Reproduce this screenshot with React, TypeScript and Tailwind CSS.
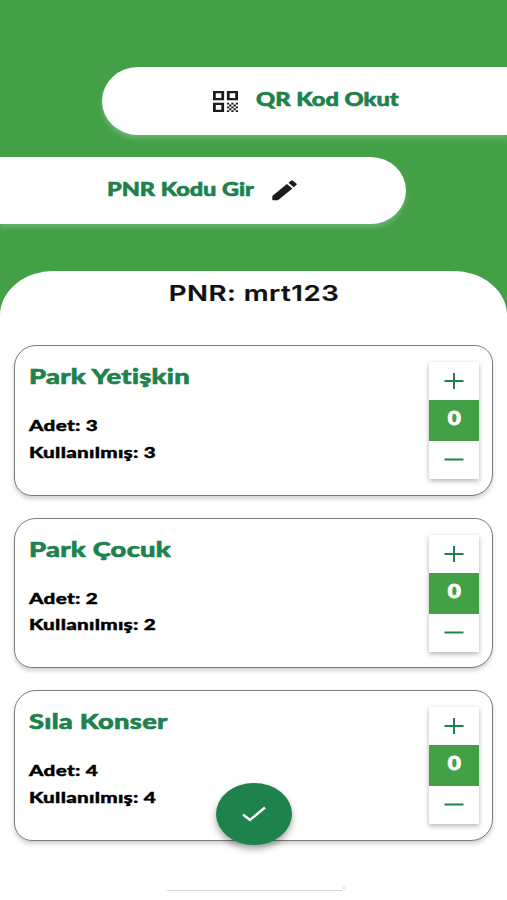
import React, { useState } from 'react';

const initialTickets = [
  { id: 1, name: 'Park Yetişkin', total: 3, used: 3, count: 0 },
  { id: 2, name: 'Park Çocuk', total: 2, used: 2, count: 0 },
  { id: 3, name: 'Sıla Konser', total: 4, used: 4, count: 0 },
];

const QrIcon = () => (
  <svg viewBox="0 0 18 18" preserveAspectRatio="none" className="w-[25px] h-[21px] shrink-0 text-[#1c1b1f]">
    <path fill="none" stroke="currentColor" strokeWidth="2" d="M1 1H7V7H1ZM11 1H17V7H11ZM1 11H7V17H1Z" />
    <path
      fill="currentColor"
      d="M10 10h1.6v1.6H10zM13.2 10h1.6v1.6h-1.6zM16.4 10H18v1.6h-1.6zM11.6 11.6h1.6v1.6h-1.6zM14.8 11.6h1.6v1.6h-1.6zM10 13.2h1.6v1.6H10zM13.2 13.2h1.6v1.6h-1.6zM16.4 13.2H18v1.6h-1.6zM11.6 14.8h1.6v1.6h-1.6zM14.8 14.8h1.6v1.6h-1.6zM10 16.4h1.6V18H10zM13.2 16.4h1.6V18h-1.6zM16.4 16.4H18V18h-1.6z"
    />
  </svg>
);

const PencilIcon = () => (
  <svg viewBox="0 0 25 21" className="w-[25px] h-[21px] shrink-0 text-[#1c1b1f]" fill="currentColor">
    <path d="M0.3 16L14.9 4.1L20.4 8.5L6 20.3H1.3Q0.3 20.3 0.3 19.4ZM16.4 2.8L19.1 0.7Q20 0 20.9 0.7L24.3 3.5Q25.1 4.2 24.3 5L21.8 7.2Z" />
  </svg>
);

const App = () => {
  const [tickets, setTickets] = useState(initialTickets);
  const [pnr] = useState('mrt123');

  const changeCount = (id: number, diff: number) => {
    setTickets(tickets.map(t => {
      if (t.id !== id) return t;
      const next = t.count + diff;
      if (next < 0 || next > t.total - t.used) return t;
      return { ...t, count: next };
    }));
  };

  return (
    <div className="relative w-full h-[900px] overflow-hidden flex flex-col bg-[#43a047] font-['Lato',sans-serif] font-black [font-variant-ligatures:none]">
      {/* Top buttons */}
      <div className="h-[270.5px] shrink-0 pt-[67px] flex flex-col gap-[22px]">
        <button className="ml-[102px] h-[68px] pl-[111px] flex items-center rounded-l-[36px_34px] bg-white text-[#1e824c] shadow-[0_4px_5px_rgba(255,255,255,0.2)]">
          <QrIcon />
          <span className="ml-[18px] mb-[4px] text-[19px] leading-6 whitespace-nowrap origin-left scale-x-[1.245] [-webkit-text-stroke:0.6px_currentColor]">QR Kod Okut</span>
        </button>
        <button className="w-[406px] h-[67px] pl-[107px] flex items-center rounded-r-[36px_34px] bg-white text-[#1e824c] shadow-[0_4px_5px_rgba(255,255,255,0.2)]">
          <span className="w-[165px] mb-[4px] text-left text-[19px] leading-6 whitespace-nowrap">
            <span className="inline-block origin-left scale-x-[1.235] [-webkit-text-stroke:0.6px_currentColor]">PNR Kodu Gir</span>
          </span>
          <PencilIcon />
        </button>
      </div>

      {/* Ticket list */}
      <div className="grow rounded-t-[54px_44px] bg-white px-[14px]">
        <h1 className="h-[74.5px] pt-[8.5px] text-center text-[22px] leading-7 font-semibold font-['Inter',sans-serif] text-[#111111]">
          <span className="inline-block tracking-[0.4px] scale-x-[1.255] [-webkit-text-stroke:0.2px_currentColor]">PNR: {pnr}</span>
        </h1>
        <div className="flex flex-col gap-[22px]">
          {tickets.map(ticket => (
            <div
              key={ticket.id}
              className="h-[150.6px] pl-[14px] pr-[13px] flex justify-between rounded-[22px_18px] border border-[#7c7c7c] bg-white shadow-[0_3px_4px_rgba(0,0,0,0.18)]"
            >
              <div className="pt-[16px] whitespace-nowrap">
                <h2 className="h-[50px] text-[21px] leading-7 text-[#1e824c] origin-left tracking-[0.2px] scale-x-[1.3] [-webkit-text-stroke:0.6px_currentColor]">{ticket.name}</h2>
                <p className="text-[15.5px] leading-[26.5px] text-black origin-left tracking-[0.2px] scale-x-[1.335] [-webkit-text-stroke:0.4px_currentColor]">Adet: {ticket.total}</p>
                <p className="text-[15.5px] leading-[26.5px] text-black origin-left tracking-[0.2px] scale-x-[1.335] [-webkit-text-stroke:0.4px_currentColor]">Kullanılmış: {ticket.used}</p>
              </div>
              <div className="mt-4 w-[50.5px] h-[117px] flex flex-col bg-white text-[#1e824c] shadow-[0_2px_5px_rgba(0,0,0,0.3)]">
                <button onClick={() => changeCount(ticket.id, 1)} className="h-[38px] flex items-center justify-center">
                  <svg width="20" height="16" viewBox="0 0 20 16" fill="none" stroke="currentColor" strokeWidth="2">
                    <path d="M0.5 8H19.5M10 0V16" />
                  </svg>
                </button>
                <div className="h-[41px] flex items-center justify-center bg-[#43a047] text-white text-[18px] leading-6">
                  <span className="mb-[5px] scale-x-[1.25] [-webkit-text-stroke:0.9px_currentColor]">{ticket.count}</span>
                </div>
                <button onClick={() => changeCount(ticket.id, -1)} className="h-[38px] flex items-center justify-center">
                  <svg width="20" height="16" viewBox="0 0 20 16" fill="none" stroke="currentColor" strokeWidth="2">
                    <path d="M0.5 7.5H19.5" />
                  </svg>
                </button>
              </div>
            </div>
          ))}
        </div>
      </div>

      {/* Confirm button */}
      <button className="absolute left-[216px] top-[783px] w-[76px] h-[62px] flex items-center justify-center rounded-[50%] bg-[#1e824c] shadow-[0_4px_7px_rgba(0,0,0,0.35)]">
        <svg width="24" height="16" viewBox="0 0 24 16" fill="none" stroke="white" strokeWidth="2.4">
          <path d="M1 8.5L8 14L23 1.5" />
        </svg>
      </button>
      <div className="absolute left-[167px] top-[890px] w-[176px] h-px bg-[#d6d6d6]" />
      <div className="absolute left-[343px] top-[887px] w-[2px] h-[2px] bg-[#dddddd]" />
    </div>
  );
};

export default App;
